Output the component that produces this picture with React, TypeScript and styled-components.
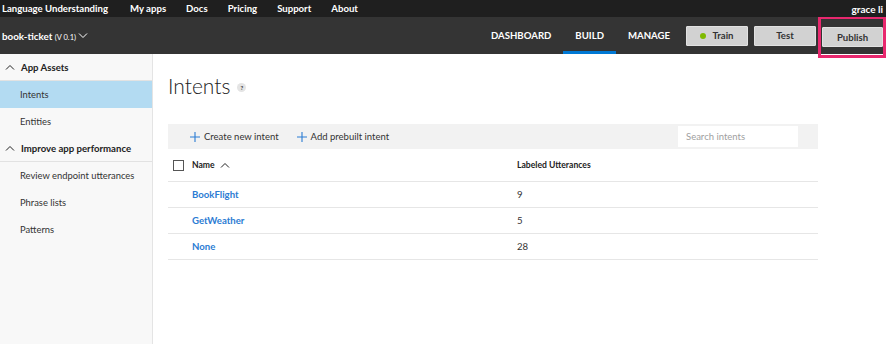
import styled, { createGlobalStyle } from 'styled-components';

const GlobalStyle = createGlobalStyle`
  html, body {
    margin: 0;
    padding: 0;
    background: #ffffff;
    font-family: 'Lato', 'Noto Sans', sans-serif;
  }
  #root {
    height: 344px;
    overflow: hidden;
  }
`;

const topLinks = ['My apps', 'Docs', 'Pricing', 'Support', 'About'];

const sections = [
  { title: 'App Assets', items: ['Intents', 'Entities'], active: 'Intents' },
  {
    title: 'Improve app performance',
    items: ['Review endpoint utterances', 'Phrase lists', 'Patterns'],
    active: '',
  },
];

const intents = [
  { name: 'BookFlight', count: 9 },
  { name: 'GetWeather', count: 5 },
  { name: 'None', count: 28 },
];

const Chevron = ({ up }: { up?: boolean }) => (
  <svg width="10" height="6" viewBox="0 0 10 6">
    <path
      d={up ? 'M1 5.5 L5 1.5 L9 5.5' : 'M1 0.5 L5 4.5 L9 0.5'}
      fill="none"
      stroke="currentColor"
      strokeWidth="1"
    />
  </svg>
);

const Plus = () => (
  <svg width="10" height="10" viewBox="0 0 10 10">
    <path d="M5 0 V10 M0 5 H10" stroke="#2b7cd3" strokeWidth="1.1" />
  </svg>
);

export default function App() {
  return (
    <>
      <GlobalStyle />
      <Page>
        <TopBar>
          <Brand>Language Understanding</Brand>
          {topLinks.map((l) => (
            <TopLink key={l}>{l}</TopLink>
          ))}
          <User>grace li</User>
        </TopBar>
        <AppBar>
          <AppName>
            <span>
              book-ticket <Version>(V 0.1)</Version>
            </span>
            <Chevron />
          </AppName>
          <Tabs>
            <Tab>DASHBOARD</Tab>
            <Tab active>BUILD</Tab>
            <Tab>MANAGE</Tab>
          </Tabs>
          <Actions>
            <ActionButton>
              <Dot />
              Train
            </ActionButton>
            <ActionButton>Test</ActionButton>
            <Highlight>
              <ActionButton narrow>Publish</ActionButton>
            </Highlight>
          </Actions>
        </AppBar>
        <Body>
          <Sidebar>
            {sections.map((s) => (
              <div key={s.title}>
                <SectionHeader>
                  <Chevron up />
                  {s.title}
                </SectionHeader>
                {s.items.map((item) => (
                  <NavItem key={item} active={item === s.active}>
                    {item}
                  </NavItem>
                ))}
              </div>
            ))}
          </Sidebar>
          <Main>
            <TitleRow>
              <Title>Intents</Title>
              <HelpDot>?</HelpDot>
            </TitleRow>
            <Toolbar>
              <ToolButton>
                <Plus />
                Create new intent
              </ToolButton>
              <ToolButton>
                <Plus />
                Add prebuilt intent
              </ToolButton>
              <Search placeholder="Search intents" />
            </Toolbar>
            <Table>
              <HeaderRow>
                <CheckCell>
                  <Checkbox />
                </CheckCell>
                <NameHead>
                  Name <Chevron up />
                </NameHead>
                <CountHead>Labeled Utterances</CountHead>
              </HeaderRow>
              {intents.map((i) => (
                <Row key={i.name}>
                  <CheckCell />
                  <NameCell>{i.name}</NameCell>
                  <CountCell>{i.count}</CountCell>
                </Row>
              ))}
            </Table>
          </Main>
        </Body>
      </Page>
    </>
  );
}

const Page = styled.div`
  display: flex;
  flex-direction: column;
  height: 344px;
`;

const TopBar = styled.div`
  display: flex;
  align-items: center;
  height: 17px;
  background: #1f1f1f;
  color: #ffffff;
  font-size: 9.6px;
  font-weight: 700;
  padding: 0 2px;
`;

const Brand = styled.span`
  width: 128px;
`;

const TopLink = styled.span`
  margin-right: 20px;
`;

const User = styled.span`
  margin-left: auto;
  margin-right: 1px;
  font-size: 10px;
`;

const AppBar = styled.div`
  display: flex;
  align-items: stretch;
  height: 37px;
  background: #343434;
  color: #ffffff;
  padding-left: 2px;
`;

const AppName = styled.div`
  display: flex;
  align-items: center;
  gap: 1px;
  font-size: 9.8px;
  font-weight: 700;
  svg {
    margin-left: 1px;
  }
`;

const Version = styled.span`
  font-size: 7.5px;
  font-weight: 400;
`;

const Tabs = styled.div`
  display: flex;
  margin-left: auto;
  margin-right: 4px;
`;

const Tab = styled.div<{ active?: boolean }>`
  display: flex;
  align-items: center;
  padding: 3px 12px 0;
  font-size: 9.6px;
  font-weight: 700;
  border-bottom: 3px solid ${({ active }) => (active ? '#0078d4' : 'transparent')};
`;

const Actions = styled.div`
  display: flex;
  align-items: center;
  gap: 6px;
`;

const ActionButton = styled.button<{ narrow?: boolean }>`
  display: flex;
  align-items: center;
  justify-content: center;
  gap: 6px;
  width: ${({ narrow }) => (narrow ? '61px' : '62px')};
  height: 20px;
  padding: 0;
  border: 1px solid #e2e2e2;
  border-radius: 1px;
  background: #d2d2d2;
  color: #333333;
  font-family: inherit;
  font-size: 9.6px;
  font-weight: 700;
`;

const Dot = styled.span`
  width: 6px;
  height: 6px;
  border-radius: 50%;
  background: #7fba00;
`;

const Highlight = styled.div`
  display: flex;
  align-items: center;
  align-self: stretch;
  margin-left: -4px;
  padding-left: 1px;
  border: 3px solid #e8286e;
  border-top-width: 2px;
  margin-bottom: -4px;
  position: relative;
  z-index: 1;
`;

const Body = styled.div`
  display: flex;
  flex: 1;
  min-height: 0;
`;

const Sidebar = styled.nav`
  width: 152px;
  background: #f8f8f8;
  border-right: 1px solid #e4e4e4;
  font-size: 9.4px;
  color: #333333;
`;

const SectionHeader = styled.div`
  display: flex;
  align-items: center;
  gap: 6px;
  height: 26px;
  padding-left: 5px;
  border-bottom: 1px solid #e2e2e2;
  font-size: 9.6px;
  font-weight: 700;
  color: #222222;
`;

const NavItem = styled.div<{ active?: boolean }>`
  display: flex;
  align-items: center;
  height: 27px;
  padding-left: 20px;
  background: ${({ active }) => (active ? '#b3dbf2' : 'transparent')};
`;

const Main = styled.main`
  flex: 1;
  padding: 16px 0 0 15px;
  margin-right: 68px;
`;

const TitleRow = styled.div`
  display: flex;
  align-items: center;
  gap: 7px;
  height: 30px;
`;

const Title = styled.h1`
  margin: 0;
  font-size: 21px;
  font-weight: 300;
  color: #222222;
`;

const HelpDot = styled.span`
  display: flex;
  align-items: center;
  justify-content: center;
  width: 9px;
  height: 9px;
  margin-top: 5px;
  border-radius: 50%;
  background: #e4e4e4;
  font-size: 6px;
  font-weight: 700;
  color: #333333;
`;

const Toolbar = styled.div`
  display: flex;
  align-items: center;
  height: 25px;
  margin-top: 24px;
  padding: 0 20px 0 22px;
  background: #f2f2f2;
`;

const ToolButton = styled.div`
  display: flex;
  align-items: center;
  gap: 4px;
  margin-right: 18px;
  font-size: 9.5px;
  color: #333333;
`;

const Search = styled.input`
  margin-left: auto;
  width: 120px;
  height: 21px;
  box-sizing: border-box;
  padding: 0 8px;
  border: none;
  background: #ffffff;
  font-family: inherit;
  font-size: 9.5px;
  &::placeholder {
    color: #a0a0a0;
  }
`;

const Table = styled.div`
  display: flex;
  flex-direction: column;
`;

const HeaderRow = styled.div`
  display: grid;
  grid-template-columns: 24px 325px 1fr;
  align-items: center;
  height: 32px;
  border-bottom: 1px solid #e6e6e6;
  font-size: 8.6px;
  font-weight: 700;
  color: #222222;
`;

const Row = styled.div`
  display: grid;
  grid-template-columns: 24px 325px 1fr;
  align-items: center;
  height: 25px;
  border-bottom: 1px solid #e6e6e6;
  font-size: 9.6px;
`;

const CheckCell = styled.div`
  display: flex;
  align-items: center;
  padding-left: 5px;
`;

const Checkbox = styled.span`
  width: 9px;
  height: 9px;
  border: 1px solid #555555;
`;

const NameHead = styled.div`
  display: flex;
  align-items: center;
  gap: 5px;
`;

const CountHead = styled.div``;

const NameCell = styled.div`
  color: #2b7cd3;
  font-weight: 700;
`;

const CountCell = styled.div`
  color: #333333;
`;
